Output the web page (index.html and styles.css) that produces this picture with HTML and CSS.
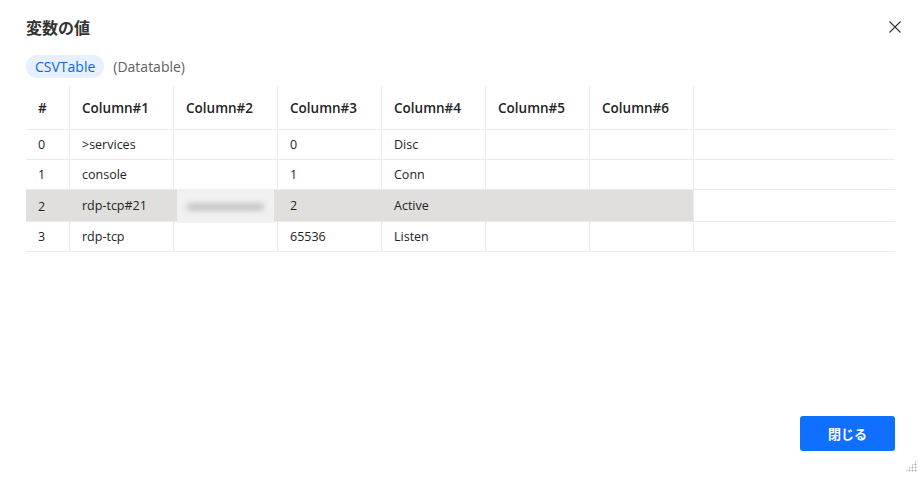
FILE: index.html
```html
<!DOCTYPE html>
<html lang="ja">
  <head>
    <meta charset="UTF-8" />
    <title>変数の値</title>
    <link rel="stylesheet" href="styles.css">
  </head>
  <body>
    <div class="dialog">
      <div class="head">
        <h1>変数の値</h1>
        <button class="close" aria-label="閉じる">
          <svg width="12" height="12" viewBox="0 0 12 12"><path d="M0.5 0.5 L11.5 11.5 M11.5 0.5 L0.5 11.5" stroke="#333" stroke-width="1.1" fill="none"/></svg>
        </button>
      </div>
      <div class="var">
        <span class="pill">CSVTable</span>
        <span class="type">(Datatable)</span>
      </div>
      <table class="grid">
        <thead>
          <tr>
            <th class="idx">#</th>
            <th>Column#1</th>
            <th>Column#2</th>
            <th>Column#3</th>
            <th>Column#4</th>
            <th>Column#5</th>
            <th>Column#6</th>
            <th class="fill"></th>
          </tr>
        </thead>
        <tbody>
          <tr>
            <td>0</td><td>&gt;services</td><td></td><td>0</td><td>Disc</td><td></td><td></td><td class="fill"></td>
          </tr>
          <tr>
            <td>1</td><td>console</td><td></td><td>1</td><td>Conn</td><td></td><td></td><td class="fill"></td>
          </tr>
          <tr class="sel">
            <td>2</td><td>rdp-tcp#21</td><td class="hidden"><span class="blur">username</span></td><td>2</td><td>Active</td><td></td><td></td><td class="fill"></td>
          </tr>
          <tr>
            <td>3</td><td>rdp-tcp</td><td></td><td>65536</td><td>Listen</td><td></td><td></td><td class="fill"></td>
          </tr>
        </tbody>
      </table>
      <div class="foot">
        <button class="btn">閉じる</button>
      </div>
      <div class="grip"></div>
    </div>
  </body>
</html>
```

FILE: styles.css
```css
body {
  margin: 0;
  padding: 0;
  background: #fff;
  font-family: "Open Sans", "Noto Sans CJK JP", sans-serif;
  color: #242424;
}
.dialog {
  width: 921px;
  height: 477px;
  box-sizing: border-box;
  padding: 0 26px;
  display: flex;
  flex-direction: column;
  position: relative;
}
.head {
  display: flex;
  justify-content: space-between;
  align-items: center;
  height: 54px;
}
.head h1 {
  margin: 0;
  font-family: "Noto Sans CJK JP", sans-serif;
  font-size: 16px;
  font-weight: 700;
  color: #333;
}
.close {
  border: none;
  background: none;
  padding: 0;
  margin-right: -6px;
  width: 12px;
  height: 12px;
  display: flex;
  cursor: pointer;
}
.var {
  display: flex;
  align-items: center;
  gap: 9px;
  height: 24px;
  margin-bottom: 8px;
}
.pill {
  background: #e6f0fe;
  color: #1166e0;
  font-size: 14px;
  padding: 2px 9px;
  border-radius: 12px;
  line-height: 19px;
}
.type {
  color: #616161;
  font-size: 14px;
}
.grid {
  border-collapse: collapse;
  width: 869px;
  font-size: 12.5px;
  table-layout: fixed;
}
.grid th,
.grid td {
  text-align: left;
  padding: 0 0 0 12px;
  border-left: 1px solid #ebebeb;
  border-bottom: 1px solid #ebebeb;
  white-space: nowrap;
}
.grid th:first-child,
.grid td:first-child {
  border-left: none;
}
.grid th {
  height: 43px;
  font-size: 13.5px;
  font-weight: 600;
  width: 91px;
}
.grid th.idx {
  width: 31px;
}
.grid th.fill {
  width: auto;
}
.grid td {
  height: 29px;
}
.grid tr.sel td {
  background: #e1dfdd;
  border-left-color: #e1dfdd;
  height: 30px;
}
.grid tr.sel td:first-child {
  padding-top: 1px;
}
.grid tr.sel td.fill {
  background: #fff;
  border-left-color: #ebebeb;
}
.grid td.hidden {
  padding: 0 3px;
  height: 30px;
  overflow: visible;
}
.blur {
  display: block;
  height: 30px;
  margin-top: -2px;
  margin-bottom: -2px;
  padding: 2px 0;
  background: #f1f1f1;
  color: transparent;
  position: relative;
}
.blur::after {
  content: "";
  position: absolute;
  left: 10px;
  right: 10px;
  top: 15px;
  height: 6px;
  border-radius: 3px;
  background: #b8b8b8;
  filter: blur(3px);
}
.foot {
  margin-top: auto;
  display: flex;
  justify-content: flex-end;
  padding-bottom: 26px;
}
.btn {
  width: 95px;
  height: 35px;
  border: none;
  border-radius: 3px;
  background: #0f6fff;
  color: #fff;
  font-family: "Noto Sans CJK JP", sans-serif;
  font-size: 13px;
  font-weight: 700;
  cursor: pointer;
}
.grip {
  position: absolute;
  right: 4px;
  bottom: 5px;
  width: 12px;
  height: 12px;
  background: radial-gradient(circle, #b0b0b0 0.8px, transparent 1.2px) 0 0 / 3px 3px;
  clip-path: polygon(100% 0, 100% 100%, 0 100%);
}
```
